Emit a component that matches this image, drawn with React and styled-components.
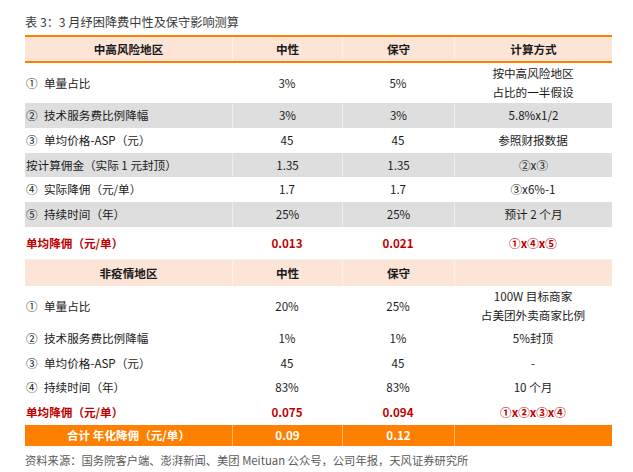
import React from "react";
import styled, { createGlobalStyle } from "styled-components";

const GlobalStyle = createGlobalStyle`
  body {
    margin: 0;
    background: #ffffff;
    font-family: "Noto Sans CJK SC", "Noto Sans", sans-serif;
  }
`;

// page wrapper
const Page = styled.div`
  width: 633px;
  height: 472px;
  padding: 12px 0 0 25px;
  box-sizing: border-box;
  color: #1a1a1a;
`;

const Title = styled.div`
  font-size: 12.2px;
  line-height: 20px;
  color: #3a3a3a;
  height: 23px;
`;

const Table = styled.div`
  width: 587px;
  display: flex;
  flex-direction: column;
`;

const rowBg = {
  head: "#fce4d6",
  gray: "#dedede",
  white: "#ffffff",
  red: "#ffffff",
  total: "#ff7f00",
};

const Row = styled.div`
  display: grid;
  grid-template-columns: 207px 110px 112px 158px;
  height: ${(p) => p.h}px;
  background: ${(p) => rowBg[p.kind]};
  box-sizing: border-box;
  border-top: ${(p) => (p.lined ? "2px solid #ff7f00" : "none")};
  border-bottom: ${(p) =>
    p.lined ? "2px solid #ff7f00" : p.kind === "red" && p.rule ? "1px solid #f0f0f0" : "none"};
  color: ${(p) => (p.kind === "red" ? "#c00000" : p.kind === "total" ? "#ffffff" : "#1a1a1a")};
  font-weight: ${(p) => (p.kind === "head" || p.kind === "red" || p.kind === "total" ? 700 : 400)};
  font-size: 11.6px;
  line-height: 19px;
`;

const Cell = styled.div`
  display: flex;
  flex-direction: column;
  align-items: ${(p) => (p.left ? "flex-start" : "center")};
  justify-content: center;
  text-align: ${(p) => (p.left ? "left" : "center")};
  padding-left: ${(p) => (p.left ? "1px" : "0")};
  border-left: ${(p) => (p.sep ? "1px solid rgba(255,255,255,0.45)" : "none")};
`;

const Num = styled.span`
  display: inline-block;
  width: 17px;
  margin-right: 1px;
`;

const Source = styled.div`
  margin-top: 5px;
  font-size: 11.3px;
  line-height: 18px;
  color: #595959;
`;

function Label({ n, children }) {
  return (
    <span>
      {n && <Num>{n}</Num>}
      {children}
    </span>
  );
}

function TableRow({ kind, h, lined, rule, cells, sep }) {
  return (
    <Row kind={kind} h={h} lined={lined} rule={rule}>
      {cells.map((c, i) => (
        <Cell key={i} left={i === 0 && kind !== "head" && kind !== "total"} sep={sep && i > 0}>
          {c}
        </Cell>
      ))}
    </Row>
  );
}

const twoLines = (a, b) => (
  <>
    <span>{a}</span>
    <span>{b}</span>
  </>
);

function App() {
  return (
    <Page>
      <GlobalStyle />
      <Title>表 3：3 月纾困降费中性及保守影响测算</Title>
      <Table>
        <TableRow kind="head" h={28} lined sep cells={["中高风险地区", "中性", "保守", "计算方式"]} />
        <TableRow
          kind="white"
          h={40}
          cells={[<Label n="①">单量占比</Label>, "3%", "5%", twoLines("按中高风险地区", "占比的一半假设")]}
        />
        <TableRow kind="gray" h={25} sep cells={[<Label n="②">技术服务费比例降幅</Label>, "3%", "3%", "5.8%x1/2"]} />
        <TableRow kind="white" h={25} cells={[<Label n="③">单均价格-ASP（元）</Label>, "45", "45", "参照财报数据"]} />
        <TableRow kind="gray" h={24} sep cells={[<Label>按计算佣金（实际 1 元封顶）</Label>, "1.35", "1.35", "②x③"]} />
        <TableRow kind="white" h={25} cells={[<Label n="④">实际降佣（元/单）</Label>, "1.7", "1.7", "③x6%-1"]} />
        <TableRow kind="gray" h={25} sep cells={[<Label n="⑤">持续时间（年）</Label>, "25%", "25%", "预计 2 个月"]} />
        <TableRow kind="red" h={33} rule cells={["单均降佣（元/单）", "0.013", "0.021", "①x④x⑤"]} />
        <TableRow kind="head" h={26} sep cells={["非疫情地区", "中性", "保守", ""]} />
        <TableRow
          kind="white"
          h={40}
          cells={[<Label n="①">单量占比</Label>, "20%", "25%", twoLines("100W 目标商家", "占美团外卖商家比例")]}
        />
        <TableRow kind="white" h={25} cells={[<Label n="②">技术服务费比例降幅</Label>, "1%", "1%", "5%封顶"]} />
        <TableRow kind="white" h={24} cells={[<Label n="③">单均价格-ASP（元）</Label>, "45", "45", "-"]} />
        <TableRow kind="white" h={25} cells={[<Label n="④">持续时间（年）</Label>, "83%", "83%", "10 个月"]} />
        <TableRow kind="red" h={25} cells={["单均降佣（元/单）", "0.075", "0.094", "①x②x③x④"]} />
        <TableRow kind="total" h={21} sep cells={["合计 年化降佣（元/单）", "0.09", "0.12", ""]} />
      </Table>
      <Source>资料来源：国务院客户端、澎湃新闻、美团 Meituan 公众号，公司年报，天风证券研究所</Source>
    </Page>
  );
}

export default App;
